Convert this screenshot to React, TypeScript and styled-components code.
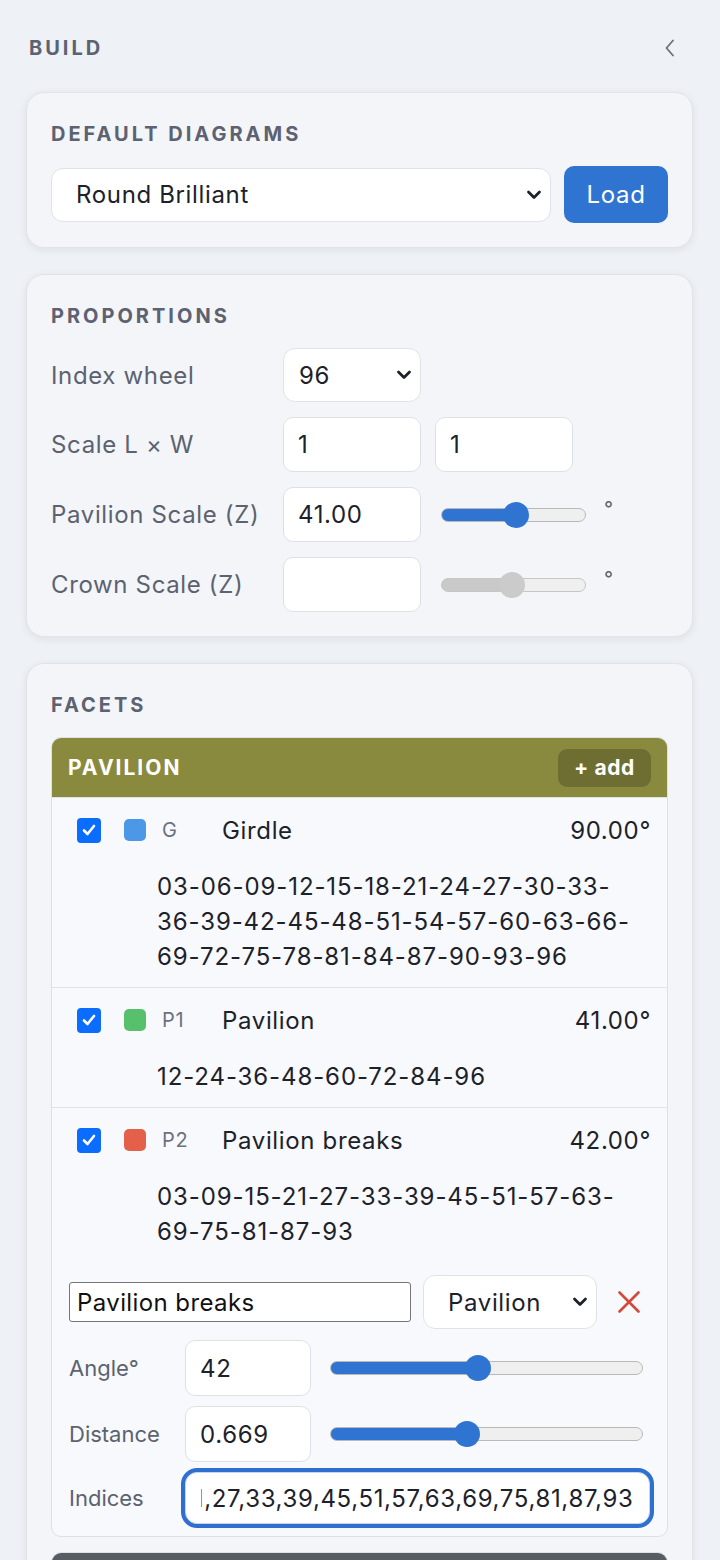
import React, { useEffect, useRef } from "react";
import styled, { createGlobalStyle } from "styled-components";

const Global = createGlobalStyle`
  html, body { margin: 0; padding: 0; background: #eef1f5; }
  body {
    font-family: Inter, "Noto Sans", "Liberation Sans", sans-serif;
    color: #1d2129;
    letter-spacing: 0.65px;
    -webkit-font-smoothing: antialiased;
  }
  * { box-sizing: border-box; }
`;

const Page = styled.div`
  width: 720px;
  padding: 29px 27px 0 26px;
  display: flex;
  flex-direction: column;
  gap: 26px;
`;

const TopBar = styled.div`
  height: 37px;
  display: flex;
  align-items: center;
  justify-content: space-between;
  padding: 0 16px 0 3px;
`;

const Heading = styled.h2`
  margin: 0;
  font-size: 20px;
  line-height: 22px;
  font-weight: 700;
  letter-spacing: 3px;
  text-transform: uppercase;
  color: #5c6271;
`;

const IconButton = styled.button<{ $offset?: number }>`
  border: none;
  background: none;
  padding: 0;
  margin-left: ${(p) => p.$offset ?? 0}px;
  display: flex;
  color: #6b7180;
`;

const Card = styled.section`
  background: #f3f5f9;
  border: 1px solid #e0e4ea;
  border-radius: 18px;
  box-shadow: 0 2px 8px rgba(30, 40, 60, 0.08);
  padding: 30px 24px 24px 24px;
  display: flex;
  flex-direction: column;
  gap: 21px;
`;

const Row = styled.div<{ $gap?: number }>`
  display: flex;
  align-items: center;
  gap: ${(p) => p.$gap ?? 13}px;
`;

const SelectWrap = styled.div<{ $w: number; $h?: number }>`
  position: relative;
  width: ${(p) => p.$w}px;
  height: ${(p) => p.$h ?? 54}px;
  flex: none;
`;

const Select = styled.select<{ $pad?: number }>`
  appearance: none;
  -webkit-appearance: none;
  width: 100%;
  height: 100%;
  background: #fff;
  border: 1px solid #dfe3e9;
  border-radius: 12px;
  font: inherit;
  font-size: 24px;
  letter-spacing: 0.65px;
  color: #1d2129;
  padding: 0 36px 0 ${(p) => p.$pad ?? 24}px;
`;

const Chevron = styled.svg`
  position: absolute;
  right: 9px;
  top: 50%;
  transform: translateY(-50%);
  pointer-events: none;
`;

const PrimaryButton = styled.button`
  width: 104px;
  height: 57px;
  border: none;
  border-radius: 10px;
  background: #2f74d0;
  color: #fff;
  font: inherit;
  font-size: 24px;
  letter-spacing: 0.65px;
`;

const PropGrid = styled.div`
  display: grid;
  grid-template-columns: 232px 138px 1fr;
  row-gap: 15px;
  align-items: center;
`;

const Label = styled.label<{ $size?: number }>`
  font-size: ${(p) => p.$size ?? 24}px;
  letter-spacing: ${(p) => (p.$size ? 0 : 0.65)}px;
  color: #5c6270;
`;

const Field = styled.input<{ $w?: number; $h?: number }>`
  width: ${(p) => (p.$w ? `${p.$w}px` : "100%")};
  height: ${(p) => p.$h ?? 55}px;
  background: #fff;
  border: 1px solid #dde1e7;
  border-radius: 10px;
  font: inherit;
  font-size: 24px;
  letter-spacing: 0.65px;
  color: #1d2129;
  padding: 0 14px;
  outline: none;
`;

const Extra = styled.div`
  display: flex;
  align-items: center;
  padding-left: 14px;
  gap: 18px;
`;

const Degree = styled.span`
  font-size: 20px;
  color: #5c6270;
  margin-top: -12px;
`;

const Range = styled.input.attrs({ type: "range" })<{
  $w: number;
  $fill: number;
  $muted?: boolean;
  $lead?: number;
}>`
  -webkit-appearance: none;
  appearance: none;
  width: ${(p) => p.$w}px;
  height: 28px;
  margin: 0 0 0 ${(p) => p.$lead ?? 0}px;
  background: transparent;
  flex: none;
  &::-webkit-slider-runnable-track {
    height: 14px;
    border-radius: 7px;
    border: 1px solid ${(p) => (p.$muted ? "#c6c6c6" : "#b9b9b9")};
    background: linear-gradient(
      to right,
      ${(p) => (p.$muted ? "#c9c9c9" : "#2f74d0")} 0 ${(p) => p.$fill}%,
      #efefef ${(p) => p.$fill}% 100%
    );
  }
  &::-webkit-slider-thumb {
    -webkit-appearance: none;
    width: 26px;
    height: 26px;
    border-radius: 50%;
    border: none;
    margin-top: -7px;
    background: ${(p) => (p.$muted ? "#cbcbcb" : "#2f74d0")};
  }
`;

const GroupStack = styled.div`
  display: flex;
  flex-direction: column;
  gap: 15px;
`;

const Group = styled.div`
  border: 1px solid #dde1e6;
  border-radius: 10px;
  overflow: hidden;
  background: #f7f9fc;
`;

const GroupHeader = styled.div<{ $bg: string }>`
  height: 60px;
  background: ${(p) => p.$bg};
  display: flex;
  align-items: center;
  justify-content: space-between;
  padding: 0 16px;
  border-bottom: 1px solid #dfe3e8;
`;

const GroupTitle = styled.span`
  color: #fff;
  font-weight: 700;
  font-size: 21px;
  letter-spacing: 2px;
`;

const AddButton = styled.button`
  height: 38px;
  width: 93px;
  padding: 0;
  border: none;
  border-radius: 9px;
  background: rgba(0, 0, 0, 0.2);
  color: #fff;
  font: inherit;
  font-weight: 700;
  font-size: 21px;
  letter-spacing: 0.6px;
`;

const FacetRow = styled.div<{ $last?: boolean }>`
  padding: 19px 16px 13px 25px;
  border-bottom: ${(p) => (p.$last ? "none" : "1px solid #dfe3e8")};
`;

const FacetHead = styled.div`
  display: flex;
  align-items: center;
  height: 26px;
  font-size: 24px;
`;

const Check = styled.span`
  width: 24px;
  height: 25px;
  border-radius: 4px;
  background: #0b6dfd;
  display: flex;
  align-items: center;
  justify-content: center;
  flex: none;
`;

const Swatch = styled.span<{ $color: string }>`
  width: 22px;
  height: 22px;
  border-radius: 5px;
  background: ${(p) => p.$color};
  margin-left: 23px;
  flex: none;
`;

const Code = styled.span`
  width: 60px;
  margin-left: 16px;
  font-size: 20px;
  color: #6b7180;
`;

const Name = styled.span`
  flex: 1;
`;

const Angle = styled.span``;

const Indices = styled.div`
  margin-top: 26px;
  padding: 0 4px 0 80px;
  font-size: 24px;
  line-height: 35px;
  letter-spacing: 0.9px;
`;

const Editor = styled.div`
  padding: 13px 16px 12px 17px;
  display: flex;
  flex-direction: column;
  gap: 11px;
`;

const NameInput = styled.input`
  width: 342px;
  height: 40px;
  border: 1px solid #767676;
  border-radius: 3px;
  background: #fff;
  font: inherit;
  font-size: 24px;
  letter-spacing: 0.4px;
  color: #111;
  padding: 0 7px;
`;

const EditGrid = styled.div`
  display: grid;
  grid-template-columns: 97px 126px 320px;
  column-gap: 19px;
  row-gap: 10px;
  align-items: center;
`;

const FocusField = styled(Field)`
  grid-column: 2 / span 2;
  height: 52px;
  border: 1px solid #c6d5ee;
  border-radius: 12px;
  box-shadow: 0 0 0 4px #2f6fd0;
  padding: 0 15px;
`;

const ChevronDown = () => (
  <Chevron width="16" height="11" viewBox="0 0 16 11">
    <path d="M2.5 2.5 L8 8 L13.5 2.5" fill="none" stroke="#1d2129" strokeWidth="2.8" strokeLinecap="round" strokeLinejoin="round" />
  </Chevron>
);

type Facet = {
  code: string;
  name: string;
  color: string;
  angle: string;
  indices: number[];
};

const pad = (n: number) => String(n).padStart(2, "0");

const facets: Facet[] = [
  {
    code: "G",
    name: "Girdle",
    color: "#4c98e6",
    angle: "90.00°",
    indices: Array.from({ length: 32 }, (_, i) => (i + 1) * 3),
  },
  {
    code: "P1",
    name: "Pavilion",
    color: "#57c06c",
    angle: "41.00°",
    indices: Array.from({ length: 8 }, (_, i) => (i + 1) * 12),
  },
  {
    code: "P2",
    name: "Pavilion breaks",
    color: "#e5604b",
    angle: "42.00°",
    indices: Array.from({ length: 16 }, (_, i) => 3 + i * 6),
  },
];

// fill percentage of the track so the coloured part ends under the thumb centre
const fillFor = (width: number, t: number) => ((13 + t * (width - 26)) / width) * 100;

export default function App() {
  const idxRef = useRef<HTMLInputElement>(null);
  useEffect(() => {
    const el = idxRef.current;
    if (el) el.scrollLeft = el.scrollWidth;
  }, []);

  const editIndices = facets[2].indices.map(pad).join(",");

  return (
    <>
      <Global />
      <Page>
        <TopBar>
          <Heading>Build</Heading>
          <IconButton aria-label="Collapse">
            <svg width="14" height="22" viewBox="0 0 14 22">
              <path d="M10 3.5 L3.5 11 L10 18.5" fill="none" stroke="currentColor" strokeWidth="1.8" strokeLinecap="round" strokeLinejoin="round" />
            </svg>
          </IconButton>
        </TopBar>

        <Card>
          <Heading>Default Diagrams</Heading>
          <Row>
            <SelectWrap $w={500}>
              <Select defaultValue="rb">
                <option value="rb">Round Brilliant</option>
              </Select>
              <ChevronDown />
            </SelectWrap>
            <PrimaryButton>Load</PrimaryButton>
          </Row>
        </Card>

        <Card>
          <Heading>Proportions</Heading>
          <PropGrid>
            <Label>Index wheel</Label>
            <SelectWrap $w={138}>
              <Select $pad={15} defaultValue="96">
                <option value="96">96</option>
              </Select>
              <ChevronDown />
            </SelectWrap>
            <div />

            <Label>Scale L × W</Label>
            <Field defaultValue="1" />
            <Extra>
              <Field $w={138} defaultValue="1" />
            </Extra>

            <Label>Pavilion Scale (Z)</Label>
            <Field defaultValue="41.00" />
            <Extra>
              <Range $w={145} $lead={6} $fill={fillFor(145, 0.52)} defaultValue={52} />
              <Degree>°</Degree>
            </Extra>

            <Label>Crown Scale (Z)</Label>
            <Field defaultValue="" />
            <Extra>
              <Range $w={145} $lead={6} $fill={fillFor(145, 0.49)} $muted defaultValue={49} />
              <Degree>°</Degree>
            </Extra>
          </PropGrid>
        </Card>

        <Card>
          <Heading>Facets</Heading>
          <GroupStack>
            <Group>
              <GroupHeader $bg="#8a8a3f">
                <GroupTitle>PAVILION</GroupTitle>
                <AddButton>+ add</AddButton>
              </GroupHeader>
              {facets.map((f, i) => (
                <FacetRow key={f.code} $last={i === facets.length - 1}>
                  <FacetHead>
                    <Check>
                      <svg width="16" height="16" viewBox="0 0 16 16">
                        <path d="M3 8.5 L6.5 12 L13 4" fill="none" stroke="#fff" strokeWidth="2.6" strokeLinecap="round" strokeLinejoin="round" />
                      </svg>
                    </Check>
                    <Swatch $color={f.color} />
                    <Code>{f.code}</Code>
                    <Name>{f.name}</Name>
                    <Angle>{f.angle}</Angle>
                  </FacetHead>
                  <Indices>{f.indices.map(pad).join("-")}</Indices>
                </FacetRow>
              ))}
              <Editor>
                <Row $gap={12}>
                  <NameInput defaultValue="Pavilion breaks" />
                  <SelectWrap $w={174}>
                    <Select defaultValue="pav">
                      <option value="pav">Pavilion</option>
                    </Select>
                    <ChevronDown />
                  </SelectWrap>
                  <IconButton aria-label="Delete facet" $offset={8}>
                    <svg width="24" height="24" viewBox="0 0 24 24">
                      <path d="M2.5 2.5 L21.5 21.5 M21.5 2.5 L2.5 21.5" stroke="#d4483a" strokeWidth="2.6" strokeLinecap="round" />
                    </svg>
                  </IconButton>
                </Row>
                <EditGrid>
                  <Label $size={22}>Angle°</Label>
                  <Field $h={56} defaultValue="42" />
                  <Range $w={313} $fill={fillFor(313, 0.474)} defaultValue={47} />

                  <Label $size={22}>Distance</Label>
                  <Field $h={56} defaultValue="0.669" />
                  <Range $w={313} $fill={fillFor(313, 0.429)} defaultValue={43} />

                  <Label $size={22}>Indices</Label>
                  <FocusField ref={idxRef} defaultValue={editIndices} />
                </EditGrid>
              </Editor>
            </Group>
            <Group>
              <GroupHeader $bg="#575b62">
                <GroupTitle>CROWN</GroupTitle>
                <AddButton>+ add</AddButton>
              </GroupHeader>
            </Group>
          </GroupStack>
        </Card>
      </Page>
    </>
  );
}
